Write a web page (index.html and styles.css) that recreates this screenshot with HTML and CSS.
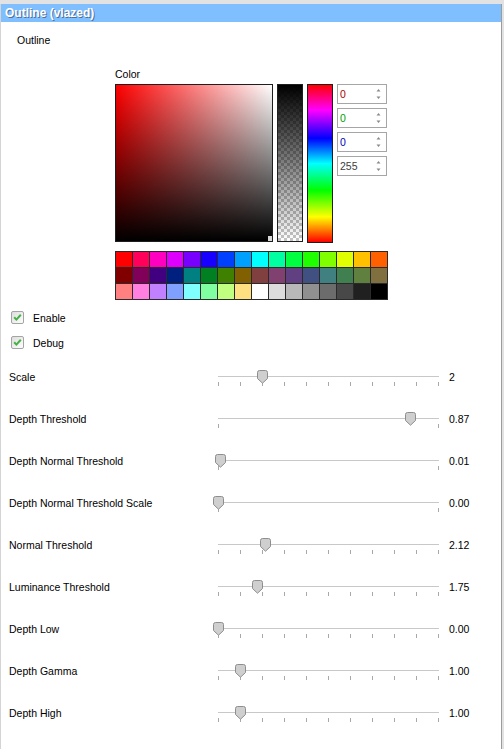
FILE: index.html
```html
<!DOCTYPE html>
<html>
<head>
<meta charset="utf-8">
<link rel="stylesheet" href="styles.css">
</head>
<body>
<div class="window">
  <div class="titlebar">Outline (vlazed)</div>
  <div class="content">
    <div class="section-title">Outline</div>

    <div class="color-block">
      <div class="color-label">Color</div>
      <div class="picker">
        <div class="sv"><span class="sv-handle"></span></div>
        <div class="alpha"></div>
        <div class="hue"></div>
        <div class="spins">
          <div class="spin"><span class="num red">0</span><svg class="arrows" width="5" height="12" viewBox="0 0 5 12"><path d="M2.5 1 L4.5 3.5 H0.5 Z M0.5 8.5 H4.5 L2.5 11 Z" fill="#8a8a8a"/></svg></div>
          <div class="spin"><span class="num green">0</span><svg class="arrows" width="5" height="12" viewBox="0 0 5 12"><path d="M2.5 1 L4.5 3.5 H0.5 Z M0.5 8.5 H4.5 L2.5 11 Z" fill="#8a8a8a"/></svg></div>
          <div class="spin"><span class="num blue">0</span><svg class="arrows" width="5" height="12" viewBox="0 0 5 12"><path d="M2.5 1 L4.5 3.5 H0.5 Z M0.5 8.5 H4.5 L2.5 11 Z" fill="#8a8a8a"/></svg></div>
          <div class="spin"><span class="num">255</span><svg class="arrows" width="5" height="12" viewBox="0 0 5 12"><path d="M2.5 1 L4.5 3.5 H0.5 Z M0.5 8.5 H4.5 L2.5 11 Z" fill="#8a8a8a"/></svg></div>
        </div>
      </div>
      <div class="swatches">
        <i class="c1"></i><i class="c2"></i><i class="c3"></i><i class="c4"></i><i class="c5"></i><i class="c6"></i><i class="c7"></i><i class="c8"></i><i class="c9"></i><i class="c10"></i><i class="c11"></i><i class="c12"></i><i class="c13"></i><i class="c14"></i><i class="c15"></i><i class="c16"></i>
        <i class="d1"></i><i class="d2"></i><i class="d3"></i><i class="d4"></i><i class="d5"></i><i class="d6"></i><i class="d7"></i><i class="d8"></i><i class="d9"></i><i class="d10"></i><i class="d11"></i><i class="d12"></i><i class="d13"></i><i class="d14"></i><i class="d15"></i><i class="d16"></i>
        <i class="e1"></i><i class="e2"></i><i class="e3"></i><i class="e4"></i><i class="e5"></i><i class="e6"></i><i class="e7"></i><i class="e8"></i><i class="e9"></i><i class="e10"></i><i class="e11"></i><i class="e12"></i><i class="e13"></i><i class="e14"></i><i class="e15"></i><i class="e16"></i>
      </div>
    </div>

    <div class="checks">
      <label class="check-row">
        <svg class="checkbox" width="13" height="13" viewBox="0 0 13 13"><defs><linearGradient id="cbg" x1="0" y1="0" x2="1" y2="1"><stop offset="0" stop-color="#dcdcdc"/><stop offset="1" stop-color="#ffffff"/></linearGradient></defs><rect x="0.5" y="0.5" width="12" height="12" rx="1.5" fill="url(#cbg)" stroke="#a4a4a4"/><path d="M3.2 6.3 L5.4 8.6 L9.8 3.8" fill="none" stroke="#46b046" stroke-width="2"/></svg>
        <span>Enable</span>
      </label>
      <label class="check-row">
        <svg class="checkbox" width="13" height="13" viewBox="0 0 13 13"><rect x="0.5" y="0.5" width="12" height="12" rx="1.5" fill="url(#cbg)" stroke="#a4a4a4"/><path d="M3.2 6.3 L5.4 8.6 L9.8 3.8" fill="none" stroke="#46b046" stroke-width="2"/></svg>
        <span>Debug</span>
      </label>
    </div>

    <div class="sliders">
      <div class="row">
        <span class="label">Scale</span>
        <div class="slider">
          <div class="track"></div>
          <div class="ticks"><i></i><i></i><i></i><i></i><i></i><i></i><i></i><i></i><i></i><i></i><i></i></div>
          <svg class="thumb" style="left:20%" width="11" height="14" viewBox="0 0 11 14"><path d="M0.5 2.5 Q0.5 0.5 2.5 0.5 H8.5 Q10.5 0.5 10.5 2.5 V8.5 L5.5 13.2 L0.5 8.5 Z" fill="#cfcfcf" stroke="#8e8e8e"/></svg>
        </div>
        <span class="value">2</span>
      </div>
      <div class="row">
        <span class="label">Depth Threshold</span>
        <div class="slider">
          <div class="track"></div>
          <div class="ticks"><i></i><i></i></div>
          <svg class="thumb" style="left:87%" width="11" height="14" viewBox="0 0 11 14"><path d="M0.5 2.5 Q0.5 0.5 2.5 0.5 H8.5 Q10.5 0.5 10.5 2.5 V8.5 L5.5 13.2 L0.5 8.5 Z" fill="#cfcfcf" stroke="#8e8e8e"/></svg>
        </div>
        <span class="value">0.87</span>
      </div>
      <div class="row">
        <span class="label">Depth Normal Threshold</span>
        <div class="slider">
          <div class="track"></div>
          <div class="ticks"><i></i><i></i></div>
          <svg class="thumb" style="left:1%" width="11" height="14" viewBox="0 0 11 14"><path d="M0.5 2.5 Q0.5 0.5 2.5 0.5 H8.5 Q10.5 0.5 10.5 2.5 V8.5 L5.5 13.2 L0.5 8.5 Z" fill="#cfcfcf" stroke="#8e8e8e"/></svg>
        </div>
        <span class="value">0.01</span>
      </div>
      <div class="row">
        <span class="label">Depth Normal Threshold Scale</span>
        <div class="slider">
          <div class="track"></div>
          <div class="ticks"><i></i><i></i></div>
          <svg class="thumb" style="left:0%" width="11" height="14" viewBox="0 0 11 14"><path d="M0.5 2.5 Q0.5 0.5 2.5 0.5 H8.5 Q10.5 0.5 10.5 2.5 V8.5 L5.5 13.2 L0.5 8.5 Z" fill="#cfcfcf" stroke="#8e8e8e"/></svg>
        </div>
        <span class="value">0.00</span>
      </div>
      <div class="row">
        <span class="label">Normal Threshold</span>
        <div class="slider">
          <div class="track"></div>
          <div class="ticks"><i></i><i></i><i></i><i></i><i></i><i></i><i></i><i></i><i></i><i></i><i></i></div>
          <svg class="thumb" style="left:21.2%" width="11" height="14" viewBox="0 0 11 14"><path d="M0.5 2.5 Q0.5 0.5 2.5 0.5 H8.5 Q10.5 0.5 10.5 2.5 V8.5 L5.5 13.2 L0.5 8.5 Z" fill="#cfcfcf" stroke="#8e8e8e"/></svg>
        </div>
        <span class="value">2.12</span>
      </div>
      <div class="row">
        <span class="label">Luminance Threshold</span>
        <div class="slider">
          <div class="track"></div>
          <div class="ticks"><i></i><i></i><i></i><i></i><i></i><i></i><i></i><i></i><i></i><i></i><i></i></div>
          <svg class="thumb" style="left:17.5%" width="11" height="14" viewBox="0 0 11 14"><path d="M0.5 2.5 Q0.5 0.5 2.5 0.5 H8.5 Q10.5 0.5 10.5 2.5 V8.5 L5.5 13.2 L0.5 8.5 Z" fill="#cfcfcf" stroke="#8e8e8e"/></svg>
        </div>
        <span class="value">1.75</span>
      </div>
      <div class="row">
        <span class="label">Depth Low</span>
        <div class="slider">
          <div class="track"></div>
          <div class="ticks"><i></i><i></i><i></i><i></i><i></i><i></i><i></i><i></i><i></i><i></i><i></i></div>
          <svg class="thumb" style="left:0%" width="11" height="14" viewBox="0 0 11 14"><path d="M0.5 2.5 Q0.5 0.5 2.5 0.5 H8.5 Q10.5 0.5 10.5 2.5 V8.5 L5.5 13.2 L0.5 8.5 Z" fill="#cfcfcf" stroke="#8e8e8e"/></svg>
        </div>
        <span class="value">0.00</span>
      </div>
      <div class="row">
        <span class="label">Depth Gamma</span>
        <div class="slider">
          <div class="track"></div>
          <div class="ticks"><i></i><i></i><i></i><i></i><i></i><i></i><i></i><i></i><i></i><i></i><i></i></div>
          <svg class="thumb" style="left:10%" width="11" height="14" viewBox="0 0 11 14"><path d="M0.5 2.5 Q0.5 0.5 2.5 0.5 H8.5 Q10.5 0.5 10.5 2.5 V8.5 L5.5 13.2 L0.5 8.5 Z" fill="#cfcfcf" stroke="#8e8e8e"/></svg>
        </div>
        <span class="value">1.00</span>
      </div>
      <div class="row">
        <span class="label">Depth High</span>
        <div class="slider">
          <div class="track"></div>
          <div class="ticks"><i></i><i></i><i></i><i></i><i></i><i></i><i></i><i></i><i></i><i></i><i></i></div>
          <svg class="thumb" style="left:10%" width="11" height="14" viewBox="0 0 11 14"><path d="M0.5 2.5 Q0.5 0.5 2.5 0.5 H8.5 Q10.5 0.5 10.5 2.5 V8.5 L5.5 13.2 L0.5 8.5 Z" fill="#cfcfcf" stroke="#8e8e8e"/></svg>
        </div>
        <span class="value">1.00</span>
      </div>
    </div>
  </div>
</div>
</body>
</html>
```

FILE: styles.css
```css
* { box-sizing: border-box; }
html, body { margin: 0; padding: 0; }
body {
  background: #e2e2e2;
  font-family: "Liberation Sans", Arial, sans-serif;
  font-size: 10.5px;
  color: #000;
  height: 749px;
  overflow: hidden;
}
.window {
  margin: 4px 2px 0 0;
  height: 745px;
  background: #fff;
  border-left: 1px solid #d4d4d4;
  border-right: 1px solid #9c9c9c;
}
.titlebar {
  height: 18px;
  line-height: 18px;
  background: #80bfff;
  color: #fff;
  font-weight: bold;
  font-size: 12px;
  padding-left: 4px;
  text-shadow: 1px 1px 0 #4d6f99;
}
.content { display: flex; flex-direction: column; }
.section-title {
  margin-top: 11px;
  line-height: 14px;
  padding-left: 16px;
}
.color-block {
  margin-top: 20px;
  margin-left: 114px;
  display: flex;
  flex-direction: column;
}
.color-label { line-height: 14px; }
.picker {
  margin-top: 3px;
  display: flex;
  gap: 4px;
  align-items: flex-start;
}
.sv {
  position: relative;
  width: 158px;
  height: 158px;
  border: 1px solid #1e1e1e;
  background:
    linear-gradient(to bottom, rgba(0,0,0,0), #000),
    linear-gradient(to right, #ff0000, #ffffff);
}
.sv-handle {
  position: absolute;
  right: 0;
  bottom: 0;
  width: 4px;
  height: 5px;
  background: #d8d8d8;
}
.alpha {
  width: 26px;
  height: 158px;
  border: 1px solid #1e1e1e;
  background:
    linear-gradient(to bottom, #000, rgba(0,0,0,0)),
    conic-gradient(#c4c4c4 25%, #fff 0 50%, #c4c4c4 0 75%, #fff 0);
  background-size: 100% 100%, 6px 6px;
}
.hue {
  width: 26px;
  height: 159px;
  border: 1px solid #1e1e1e;
  background: linear-gradient(to bottom, #f00 0%, #f0f 16%, #00f 34%, #0ff 50%, #0f0 67%, #ff0 84%, #f00 100%);
}
.spins {
  display: flex;
  flex-direction: column;
  gap: 4px;
}
.spin {
  width: 50px;
  height: 20px;
  border: 1px solid #a6a6a6;
  display: flex;
  align-items: center;
  padding: 0 5px 0 2px;
  background: #fff;
}
.num { flex: 1; color: #404040; font-size: 10.5px; }
.num.red { color: #b00000; }
.num.green { color: #00a000; }
.num.blue { color: #0000c0; }
.arrows { display: block; }

.swatches {
  margin-top: 8px;
  width: 273px;
  display: grid;
  grid-template-columns: repeat(16, 16px);
  grid-auto-rows: 15px;
  gap: 1px;
  padding: 1px;
  background: #2a2a2a;
}
.swatches i { display: block; }
.c1{background:#ff0000}.c2{background:#ff005a}.c3{background:#ff00c0}.c4{background:#de00ff}.c5{background:#7800ff}.c6{background:#1800ff}.c7{background:#0040ff}.c8{background:#00a0ff}.c9{background:#00ffff}.c10{background:#00ffa0}.c11{background:#00ff40}.c12{background:#20ff00}.c13{background:#80ff00}.c14{background:#e0ff00}.c15{background:#ffc000}.c16{background:#ff6000}
.d1{background:#800000}.d2{background:#80005a}.d3{background:#400080}.d4{background:#002080}.d5{background:#008080}.d6{background:#008020}.d7{background:#408000}.d8{background:#806000}.d9{background:#804040}.d10{background:#804070}.d11{background:#604080}.d12{background:#405080}.d13{background:#408080}.d14{background:#408050}.d15{background:#608040}.d16{background:#807040}
.e1{background:#ff8080}.e2{background:#ff80e0}.e3{background:#c080ff}.e4{background:#80a0ff}.e5{background:#80ffff}.e6{background:#80ffa0}.e7{background:#c0ff80}.e8{background:#ffe080}.e9{background:#ffffff}.e10{background:#dcdcdc}.e11{background:#b8b8b8}.e12{background:#909090}.e13{background:#6c6c6c}.e14{background:#484848}.e15{background:#202020}.e16{background:#000000}

.checks {
  margin-top: 5px;
  display: flex;
  flex-direction: column;
}
.check-row {
  height: 25px;
  display: flex;
  align-items: center;
  padding-left: 10px;
}
.checkbox { display: block; margin-right: 9px; }

.sliders { display: flex; flex-direction: column; margin-top: 1px; }
.row {
  height: 42px;
  display: flex;
  align-items: center;
  padding-left: 8px;
}
.label { width: 209px; }
.slider {
  position: relative;
  width: 221px;
  height: 42px;
  padding-top: 20px;
}
.track { height: 1px; background: #c8c8c8; }
.ticks {
  margin-top: 5px;
  height: 4px;
  display: flex;
  justify-content: space-between;
}
.ticks i { display: block; width: 1px; height: 4px; background: #a8a8a8; }
.thumb {
  position: absolute;
  top: 14px;
  margin-left: -5px;
  display: block;
}
.value { margin-left: 10px; }
```
